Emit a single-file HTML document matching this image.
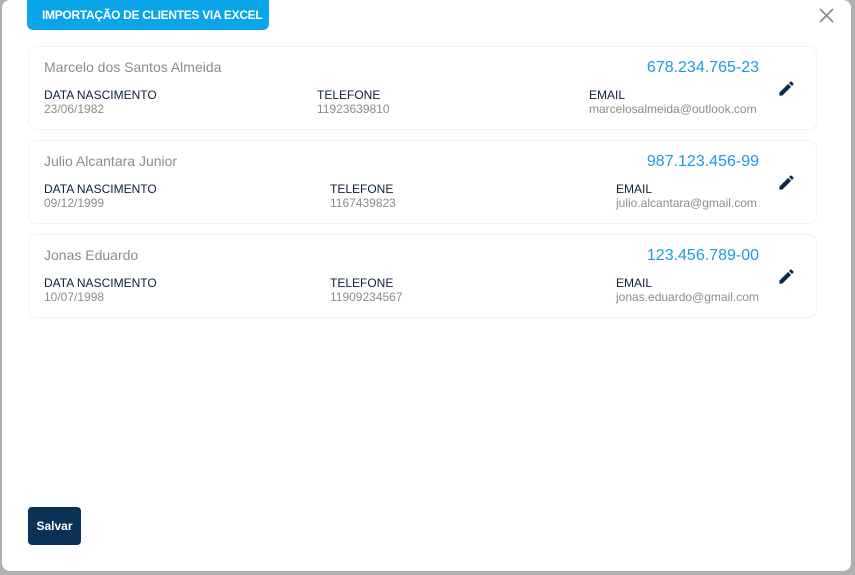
<!DOCTYPE html>
<html><head><meta charset="utf-8"><style>
*{margin:0;padding:0;box-sizing:border-box}
body{width:855px;height:575px;background:#b0b0b0;font-family:"Liberation Sans",sans-serif;position:relative;overflow:hidden}
.modal{position:absolute;left:2px;top:0;width:849px;height:571px;background:#fff;border-radius:8px}
.tab{position:absolute;left:27px;top:0;width:242px;height:30px;background:#0aa5e8;border-radius:0 0 6px 6px;color:#fff;font-weight:bold;font-size:12px;line-height:31px;padding-left:15px;white-space:nowrap;letter-spacing:-0.3px;overflow:hidden}
.x{position:absolute;left:819px;top:8px}
.card{position:absolute;left:28px;width:789px;height:84px;border:1px solid #f2f3f5;border-radius:8px}
.a{position:absolute;white-space:nowrap}
.nm{font-size:14px;color:#8c8c8c;top:12px;left:15px}
.cpf{font-size:16px;color:#1a9be2;top:12px;right:57px}
.lb{font-size:12px;color:#0d1f3a;top:41px}
.vl{font-size:12px;color:#8c8c8c;top:55px}
.ed{position:absolute;left:748px;top:32px}
.btn{position:absolute;left:28px;top:507px;width:53px;height:38px;background:#0b3155;border-radius:4px;color:#fff;font-weight:bold;font-size:12px;text-align:center;line-height:38px}
</style></head><body>
<div class="modal"></div>
<div class="tab">IMPORTAÇÃO DE CLIENTES VIA EXCEL</div>
<svg class="x" width="15" height="15" viewBox="0 0 15 15"><path d="M1 1L14 14M14 1L1 14" stroke="#8a8a8a" stroke-width="1.6"/></svg>

<div class="card" style="top:46px">
<div class="a nm">Marcelo dos Santos Almeida</div>
<div class="a cpf">678.234.765-23</div>
<div class="a lb" style="left:15px">DATA NASCIMENTO</div><div class="a vl" style="left:15px">23/06/1982</div>
<div class="a lb" style="left:288px">TELEFONE</div><div class="a vl" style="left:288px">11923639810</div>
<div class="a lb" style="left:560px">EMAIL</div><div class="a vl" style="left:560px">marcelosalmeida@outlook.com</div>
<svg class="ed" width="19" height="19" viewBox="0 0 24 24"><path fill="#0d2a4a" d="M3 17.25V21h3.75L17.81 9.94l-3.75-3.75L3 17.25zM20.71 7.04a1 1 0 000-1.41l-2.34-2.34a1 1 0 00-1.41 0l-1.83 1.83 3.75 3.75 1.83-1.83z"/></svg>
</div>

<div class="card" style="top:140px">
<div class="a nm">Julio Alcantara Junior</div>
<div class="a cpf">987.123.456-99</div>
<div class="a lb" style="left:15px">DATA NASCIMENTO</div><div class="a vl" style="left:15px">09/12/1999</div>
<div class="a lb" style="left:301px">TELEFONE</div><div class="a vl" style="left:301px">1167439823</div>
<div class="a lb" style="left:587px">EMAIL</div><div class="a vl" style="left:587px">julio.alcantara@gmail.com</div>
<svg class="ed" width="19" height="19" viewBox="0 0 24 24"><path fill="#0d2a4a" d="M3 17.25V21h3.75L17.81 9.94l-3.75-3.75L3 17.25zM20.71 7.04a1 1 0 000-1.41l-2.34-2.34a1 1 0 00-1.41 0l-1.83 1.83 3.75 3.75 1.83-1.83z"/></svg>
</div>

<div class="card" style="top:234px">
<div class="a nm">Jonas Eduardo</div>
<div class="a cpf">123.456.789-00</div>
<div class="a lb" style="left:15px">DATA NASCIMENTO</div><div class="a vl" style="left:15px">10/07/1998</div>
<div class="a lb" style="left:301px">TELEFONE</div><div class="a vl" style="left:301px">11909234567</div>
<div class="a lb" style="left:587px">EMAIL</div><div class="a vl" style="left:587px">jonas.eduardo@gmail.com</div>
<svg class="ed" width="19" height="19" viewBox="0 0 24 24"><path fill="#0d2a4a" d="M3 17.25V21h3.75L17.81 9.94l-3.75-3.75L3 17.25zM20.71 7.04a1 1 0 000-1.41l-2.34-2.34a1 1 0 00-1.41 0l-1.83 1.83 3.75 3.75 1.83-1.83z"/></svg>
</div>

<div class="btn">Salvar</div>
</body></html>
